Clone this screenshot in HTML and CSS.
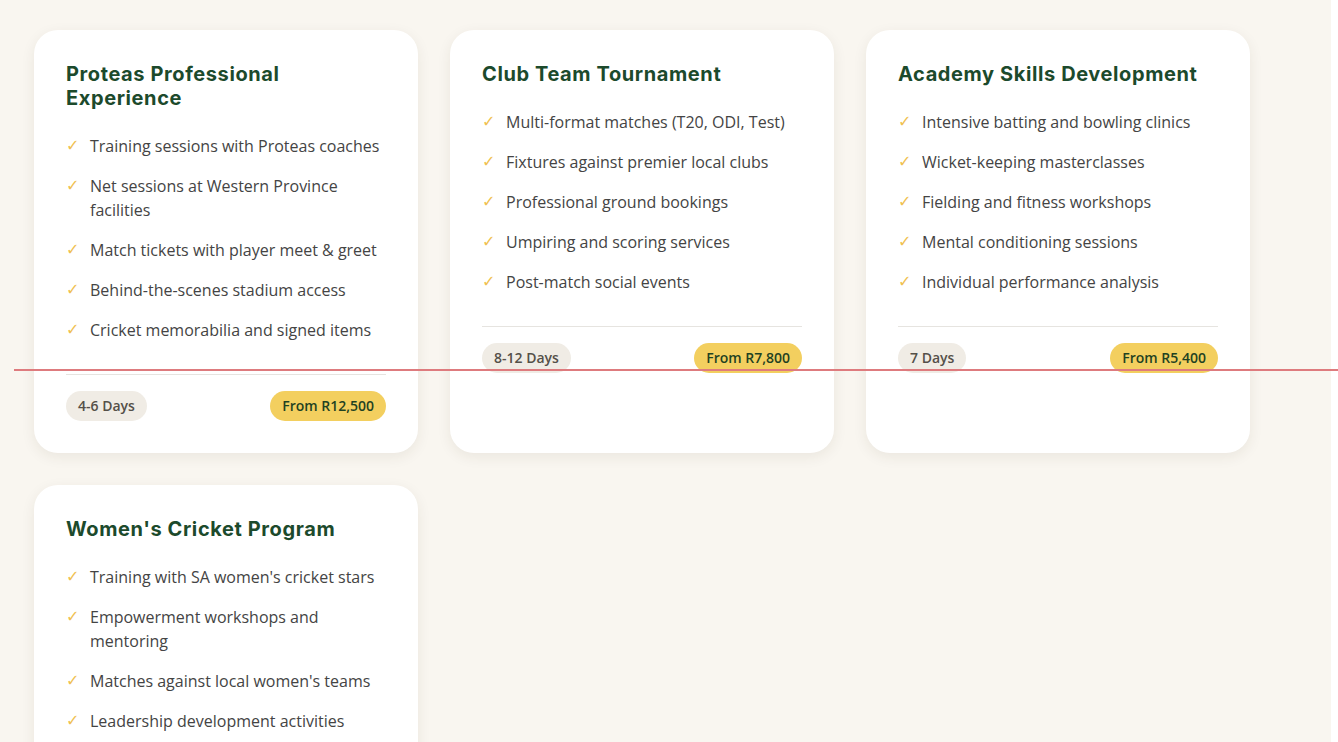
FILE: index.html
```html
<!DOCTYPE html>
<html lang="en">
<head>
<meta charset="utf-8">
<title>Cricket Programs</title>
<link rel="stylesheet" href="styles.css">
</head>
<body>
<main class="page">
  <div class="grid">
    <article class="card">
      <h3 class="card-title">Proteas Professional Experience</h3>
      <ul class="features">
        <li><span class="check">✓</span><span>Training sessions with Proteas coaches</span></li>
        <li><span class="check">✓</span><span>Net sessions at Western Province facilities</span></li>
        <li><span class="check">✓</span><span>Match tickets with player meet &amp; greet</span></li>
        <li><span class="check">✓</span><span>Behind-the-scenes stadium access</span></li>
        <li><span class="check">✓</span><span>Cricket memorabilia and signed items</span></li>
      </ul>
      <div class="card-footer">
        <span class="pill duration">4-6 Days</span>
        <span class="pill price">From R12,500</span>
      </div>
    </article>
    <article class="card">
      <h3 class="card-title">Club Team Tournament</h3>
      <ul class="features">
        <li><span class="check">✓</span><span>Multi-format matches (T20, ODI, Test)</span></li>
        <li><span class="check">✓</span><span>Fixtures against premier local clubs</span></li>
        <li><span class="check">✓</span><span>Professional ground bookings</span></li>
        <li><span class="check">✓</span><span>Umpiring and scoring services</span></li>
        <li><span class="check">✓</span><span>Post-match social events</span></li>
      </ul>
      <div class="card-footer">
        <span class="pill duration">8-12 Days</span>
        <span class="pill price">From R7,800</span>
      </div>
    </article>
    <article class="card">
      <h3 class="card-title">Academy Skills Development</h3>
      <ul class="features">
        <li><span class="check">✓</span><span>Intensive batting and bowling clinics</span></li>
        <li><span class="check">✓</span><span>Wicket-keeping masterclasses</span></li>
        <li><span class="check">✓</span><span>Fielding and fitness workshops</span></li>
        <li><span class="check">✓</span><span>Mental conditioning sessions</span></li>
        <li><span class="check">✓</span><span>Individual performance analysis</span></li>
      </ul>
      <div class="card-footer">
        <span class="pill duration">7 Days</span>
        <span class="pill price">From R5,400</span>
      </div>
    </article>
    <article class="card">
      <h3 class="card-title">Women's Cricket Program</h3>
      <ul class="features">
        <li><span class="check">✓</span><span>Training with SA women's cricket stars</span></li>
        <li><span class="check">✓</span><span>Empowerment workshops and mentoring</span></li>
        <li><span class="check">✓</span><span>Matches against local women's teams</span></li>
        <li><span class="check">✓</span><span>Leadership development activities</span></li>
      </ul>
      <div class="card-footer">
        <span class="pill duration">5-7 Days</span>
        <span class="pill price">From R6,900</span>
      </div>
    </article>
  </div>
</main>
<div class="guide-line"></div>
</body>
</html>
```
FILE: styles.css
```css
html {
  background: #ffffff;
}
body {
  margin: 0;
  font-family: "Open Sans", "Noto Sans", sans-serif;
  color: #444444;
}
.page {
  width: 1331px;
  box-sizing: border-box;
  background: #f9f6f0;
  padding: 30px 0 40px 34px;
}
.grid {
  display: grid;
  grid-template-columns: repeat(3, 384px);
  gap: 32px 32px;
  align-items: stretch;
}
.card {
  background: #ffffff;
  border-radius: 24px;
  padding: 32px;
  box-shadow: 0 4px 14px rgba(60, 45, 20, 0.08);
}
.card-title {
  margin: 0 0 24px;
  font-family: "Inter", "Noto Sans", sans-serif;
  font-weight: 700;
  font-size: 20px;
  line-height: 24px;
  color: #1c4a2c;
  letter-spacing: 0.6px;
}
.features {
  list-style: none;
  margin: 0;
  padding: 0;
  display: flex;
  flex-direction: column;
  gap: 16px;
}
.features li {
  display: flex;
  font-size: 16px;
  line-height: 24px;
  color: #444444;
}
.check {
  flex: 0 0 24px;
  color: #f0c150;
  font-family: "DejaVu Sans", sans-serif;
  font-size: 16px;
}
.card-footer {
  margin-top: 32px;
  padding-top: 16px;
  border-top: 1px solid #e6e4e0;
  display: flex;
  justify-content: space-between;
  align-items: center;
}
.pill {
  height: 30px;
  line-height: 30px;
  padding: 0 12px;
  border-radius: 15px;
  font-size: 14px;
  font-weight: 600;
}
.duration {
  background: #f0ece5;
  color: #555049;
}
.price {
  background: #f3cf5f;
  color: #1f4222;
}
.guide-line {
  position: absolute;
  left: 14px;
  right: 0;
  top: 369px;
  height: 2px;
  background: #de7b7e;
}
```
